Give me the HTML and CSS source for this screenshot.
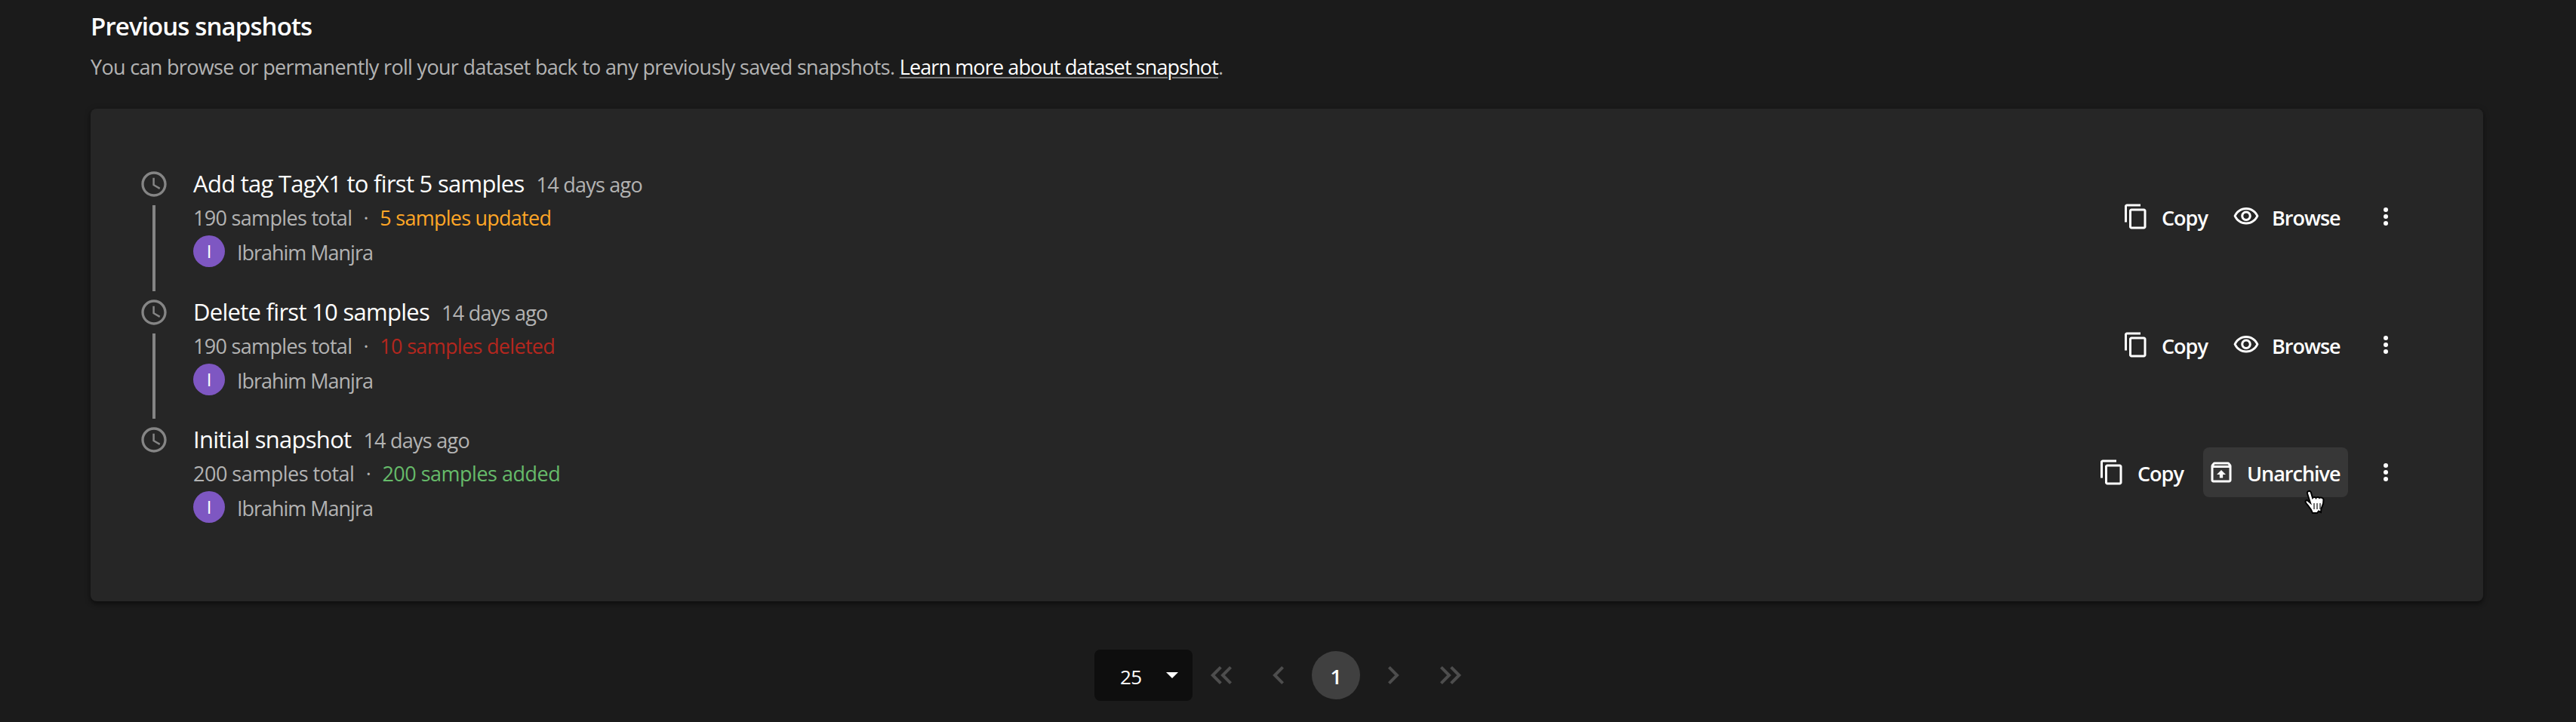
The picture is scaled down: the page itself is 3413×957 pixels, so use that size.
FILE: index.html
```html
<!DOCTYPE html>
<html lang="en">
<head>
<meta charset="utf-8">
<title>Previous snapshots</title>
<link rel="stylesheet" href="styles.css">
</head>
<body>
<svg class="defs" width="0" height="0">
  <symbol id="clock" viewBox="0 0 24 24"><path d="M11.99 2C6.47 2 2 6.48 2 12s4.47 10 9.99 10C17.52 22 22 17.52 22 12S17.52 2 11.99 2zM12 20c-4.42 0-8-3.58-8-8s3.58-8 8-8 8 3.58 8 8-3.58 8-8 8zm.5-13H11v6l5.25 3.15.75-1.23-4.5-2.67z"/></symbol>
  <symbol id="copy" viewBox="0 0 24 24"><path d="M16 1H4c-1.100 0-2 .9-2 2v14h2V3h12V1zm3 4H8c-1.100 0-2 .9-2 2v14c0 1.100.9 2 2 2h11c1.100 0 2-.9 2-2V7c0-1.100-.9-2-2-2zm0 16H8V7h11v14z"/></symbol>
  <symbol id="eye" viewBox="0 0 24 24"><path d="M12 6c3.790 0 7.170 2.130 8.820 5.500C19.170 14.870 15.790 17 12 17s-7.170-2.130-8.820-5.500C4.830 8.130 8.210 6 12 6m0-2C7 4 2.730 7.110 1 11.500 2.730 15.890 7 19 12 19s9.270-3.110 11-7.500C21.270 7.110 17 4 12 4zm0 5c1.380 0 2.500 1.120 2.500 2.500S13.380 14 12 14s-2.500-1.120-2.500-2.500S10.620 9 12 9m0-2c-2.480 0-4.500 2.020-4.500 4.500S9.520 16 12 16s4.500-2.020 4.500-4.500S14.480 7 12 7z"/></symbol>
  <symbol id="unarchive" viewBox="0 0 24 24"><path d="m20.550 5.220-1.390-1.680C18.880 3.210 18.470 3 18 3H6c-.47 0-.88.21-1.150.55L3.460 5.220C3.170 5.570 3 6.010 3 6.500V19c0 1.100.89 2 2 2h14c1.100 0 2-.9 2-2V6.500c0-.49-.17-.93-.45-1.280zM6.240 5h11.520l.83 1H5.420l.82-1zM5 19V8h14v11H5zm3-5h2.550v3h2.900v-3H16l-4-4z"/></symbol>
  <symbol id="more" viewBox="0 0 24 24"><circle cx="12" cy="6" r="2"/><circle cx="12" cy="12" r="2"/><circle cx="12" cy="18" r="2"/></symbol>
</svg>
<main class="page">
  <h1 class="heading">Previous snapshots</h1>
  <p class="intro"><span class="intro-text">You can browse or permanently roll your dataset back to any previously saved snapshots.</span> <a class="link">Learn more about dataset snapshot</a>.</p>

  <section class="card">
    <article class="row">
      <div class="rail"><svg class="clock"><use href="#clock"/></svg><span class="line"></span></div>
      <div class="info">
        <div class="title-line"><h2 class="title">Add tag TagX1 to first 5 samples</h2><span class="ago">14 days ago</span></div>
        <div class="stats"><span class="total">190 samples total</span><span class="sep">·</span><span class="updated">5 samples updated</span></div>
        <div class="user"><span class="avatar">I</span><span class="name">Ibrahim Manjra</span></div>
      </div>
      <div class="actions">
        <button class="btn copy"><svg class="icon"><use href="#copy"/></svg><span class="label">Copy</span></button>
        <button class="btn browse"><svg class="icon"><use href="#eye"/></svg><span class="label">Browse</span></button>
        <svg class="icon more"><use href="#more"/></svg>
      </div>
    </article>
    <article class="row second">
      <div class="rail"><svg class="clock"><use href="#clock"/></svg><span class="line"></span></div>
      <div class="info">
        <div class="title-line"><h2 class="title">Delete first 10 samples</h2><span class="ago">14 days ago</span></div>
        <div class="stats"><span class="total">190 samples total</span><span class="sep">·</span><span class="deleted">10 samples deleted</span></div>
        <div class="user"><span class="avatar">I</span><span class="name">Ibrahim Manjra</span></div>
      </div>
      <div class="actions">
        <button class="btn copy"><svg class="icon"><use href="#copy"/></svg><span class="label">Copy</span></button>
        <button class="btn browse"><svg class="icon"><use href="#eye"/></svg><span class="label">Browse</span></button>
        <svg class="icon more"><use href="#more"/></svg>
      </div>
    </article>
    <article class="row last">
      <div class="rail"><svg class="clock"><use href="#clock"/></svg></div>
      <div class="info">
        <div class="title-line"><h2 class="title">Initial snapshot</h2><span class="ago">14 days ago</span></div>
        <div class="stats"><span class="total">200 samples total</span><span class="sep">·</span><span class="added">200 samples added</span></div>
        <div class="user"><span class="avatar">I</span><span class="name">Ibrahim Manjra</span></div>
      </div>
      <div class="actions">
        <button class="btn copy"><svg class="icon"><use href="#copy"/></svg><span class="label">Copy</span></button>
        <button class="btn unarchive"><svg class="icon"><use href="#unarchive"/></svg><span class="label">Unarchive</span>
          <svg class="cursor" viewBox="0 0 30 34"><path d="M8 2c1.500-.5 2.500.5 3 2l2 7c1-1.500 4-1.500 4.500 0 1-1.500 4-1.500 4.500 0 1.500-1 5-.5 5.500 2 .5 6-1.500 9-3 12l-.5 5-3-1.500-2 2.500h-6c-2-6-4.500-8-8.500-13-2.500-3 .5-5 2.500-3l3 2.500L6 5c-.5-1.500.5-2.700 2-3z" fill="#fff" stroke="#000" stroke-width="2"/><path d="M15 18v8M19 18v8M23 18v8" stroke="#222" stroke-width="1.300"/></svg>
        </button>
        <svg class="icon more"><use href="#more"/></svg>
      </div>
    </article>
  </section>

  <nav class="pager">
    <div class="select"><span class="size">25</span><svg class="caret" viewBox="0 0 16 8"><path d="M0 0h16L8 8z"/></svg></div>
    <svg class="arrow" viewBox="0 0 64 32"><path d="M31.400 5.400 20.800 16l10.600 10.600M44.600 5.400 34 16l10.600 10.600"/></svg>
    <svg class="arrow" viewBox="0 0 64 32"><path d="M37.600 5.400 27 16l10.600 10.600"/></svg>
    <span class="current">1</span>
    <svg class="arrow" viewBox="0 0 64 32"><path d="M26.400 5.400 37 16 26.400 26.600"/></svg>
    <svg class="arrow" viewBox="0 0 64 32"><path d="M19.400 5.400 30 16 19.400 26.600M32.600 5.400 43.200 16 32.600 26.600"/></svg>
  </nav>
</main>
</body>
</html>
```
FILE: styles.css
```css
* { box-sizing: border-box; margin: 0; padding: 0; }
body {
  background: #1b1b1b;
  color: #fff;
  font-family: "Open Sans", "Noto Sans", sans-serif;
  font-size: 27px;
  letter-spacing: -0.68px;
  overflow: hidden;
}
.defs { position: absolute; }
.page { padding: 14px 123px 0 120px; }
.heading { font-size: 33px; font-weight: 600; line-height: 42px; letter-spacing: -0.88px; white-space: nowrap; }
.intro { margin-top: 15px; height: 36px; line-height: 36px; color: #b3b3b3; white-space: nowrap; }
.link { color: #fff; letter-spacing: -0.88px; text-decoration: underline; text-decoration-color: #777; text-decoration-thickness: 2px; text-underline-offset: 3px; }
.card {
  margin-top: 37px;
  height: 653px;
  padding: 80px 111px 0 64px;
  background: #262626;
  border-radius: 8px;
  box-shadow: 0 4px 4px rgba(0,0,0,.25), 0 2px 8px rgba(0,0,0,.3);
}
.row { display: flex; height: 170px; }
.second { height: 169px; }
.rail { width: 40px; display: flex; flex-direction: column; align-items: center; gap: 8px; padding-bottom: 8px; }
.clock { width: 40px; height: 40px; fill: #858585; flex: none; }
.line { width: 4px; flex: 1; background: #858585; }
.info { flex: 1; padding-left: 32px; white-space: nowrap; }
.title-line { display: flex; align-items: baseline; height: 38px; line-height: 38px; }
.title { font-size: 31px; font-weight: 500; letter-spacing: -0.72px; }
.ago { margin-left: 16px; color: #b3b3b3; letter-spacing: -0.75px; }
.stats { display: flex; margin-top: 9px; height: 36px; line-height: 36px; color: #b3b3b3; }
.sep { width: 37px; text-align: center; }
.updated { color: #ffa726; letter-spacing: -0.75px; }
.deleted { color: #b3261e; }
.added { color: #66bb6a; letter-spacing: -0.5px; }
.last .total { letter-spacing: -0.5px; }
.user { display: flex; align-items: center; margin-top: 5px; height: 42px; color: #b3b3b3; }
.avatar { width: 42px; height: 42px; border-radius: 50%; background: #7e57c2; color: #fff; font-size: 24px; line-height: 42px; letter-spacing: 0; text-align: center; }
.name { margin-left: 16px; padding-top: 2px; letter-spacing: -1.02px; }
.actions { display: flex; align-items: center; height: 66px; margin-top: 30px; }
.btn { display: flex; align-items: center; height: 66px; border: 0; border-radius: 8px; background: none; color: #fff; font: 600 27px "Open Sans", "Noto Sans", sans-serif; letter-spacing: -1px; white-space: nowrap; gap: 16px; padding-left: 6px; position: relative; }
.label { padding-top: 2px; }
.icon { width: 36px; height: 36px; fill: currentColor; flex: none; }
.copy { width: 126px; margin-right: 21px; }
.last .copy { margin-right: 19px; }
.browse { width: 158px; padding-left: 5px; }
.unarchive { width: 192px; background: #373737; }
.more { margin-left: 32px; }
.cursor { position: absolute; left: 132px; top: 56px; width: 30px; height: 34px; fill: none; }
.pager { display: flex; align-items: center; height: 68px; gap: 12px; margin-top: 64px; padding-left: 1330px; }
.select { display: flex; flex: none; align-items: center; width: 130px; height: 68px; padding-left: 34px; margin-right: -6px; border-radius: 8px; background: #0e0e0e; }
.size { width: 61px; padding-top: 4px; font-size: 26px; font-weight: 500; }
.caret { width: 16px; height: 8px; fill: #fff; }
.arrow { width: 64px; height: 32px; flex: none; fill: none; stroke: #4d4d4d; stroke-width: 4; }
.current { display: flex; flex: none; align-items: center; justify-content: center; width: 64px; height: 64px; padding-top: 3px; border-radius: 50%; background: #404040; font-weight: 600; }
```
